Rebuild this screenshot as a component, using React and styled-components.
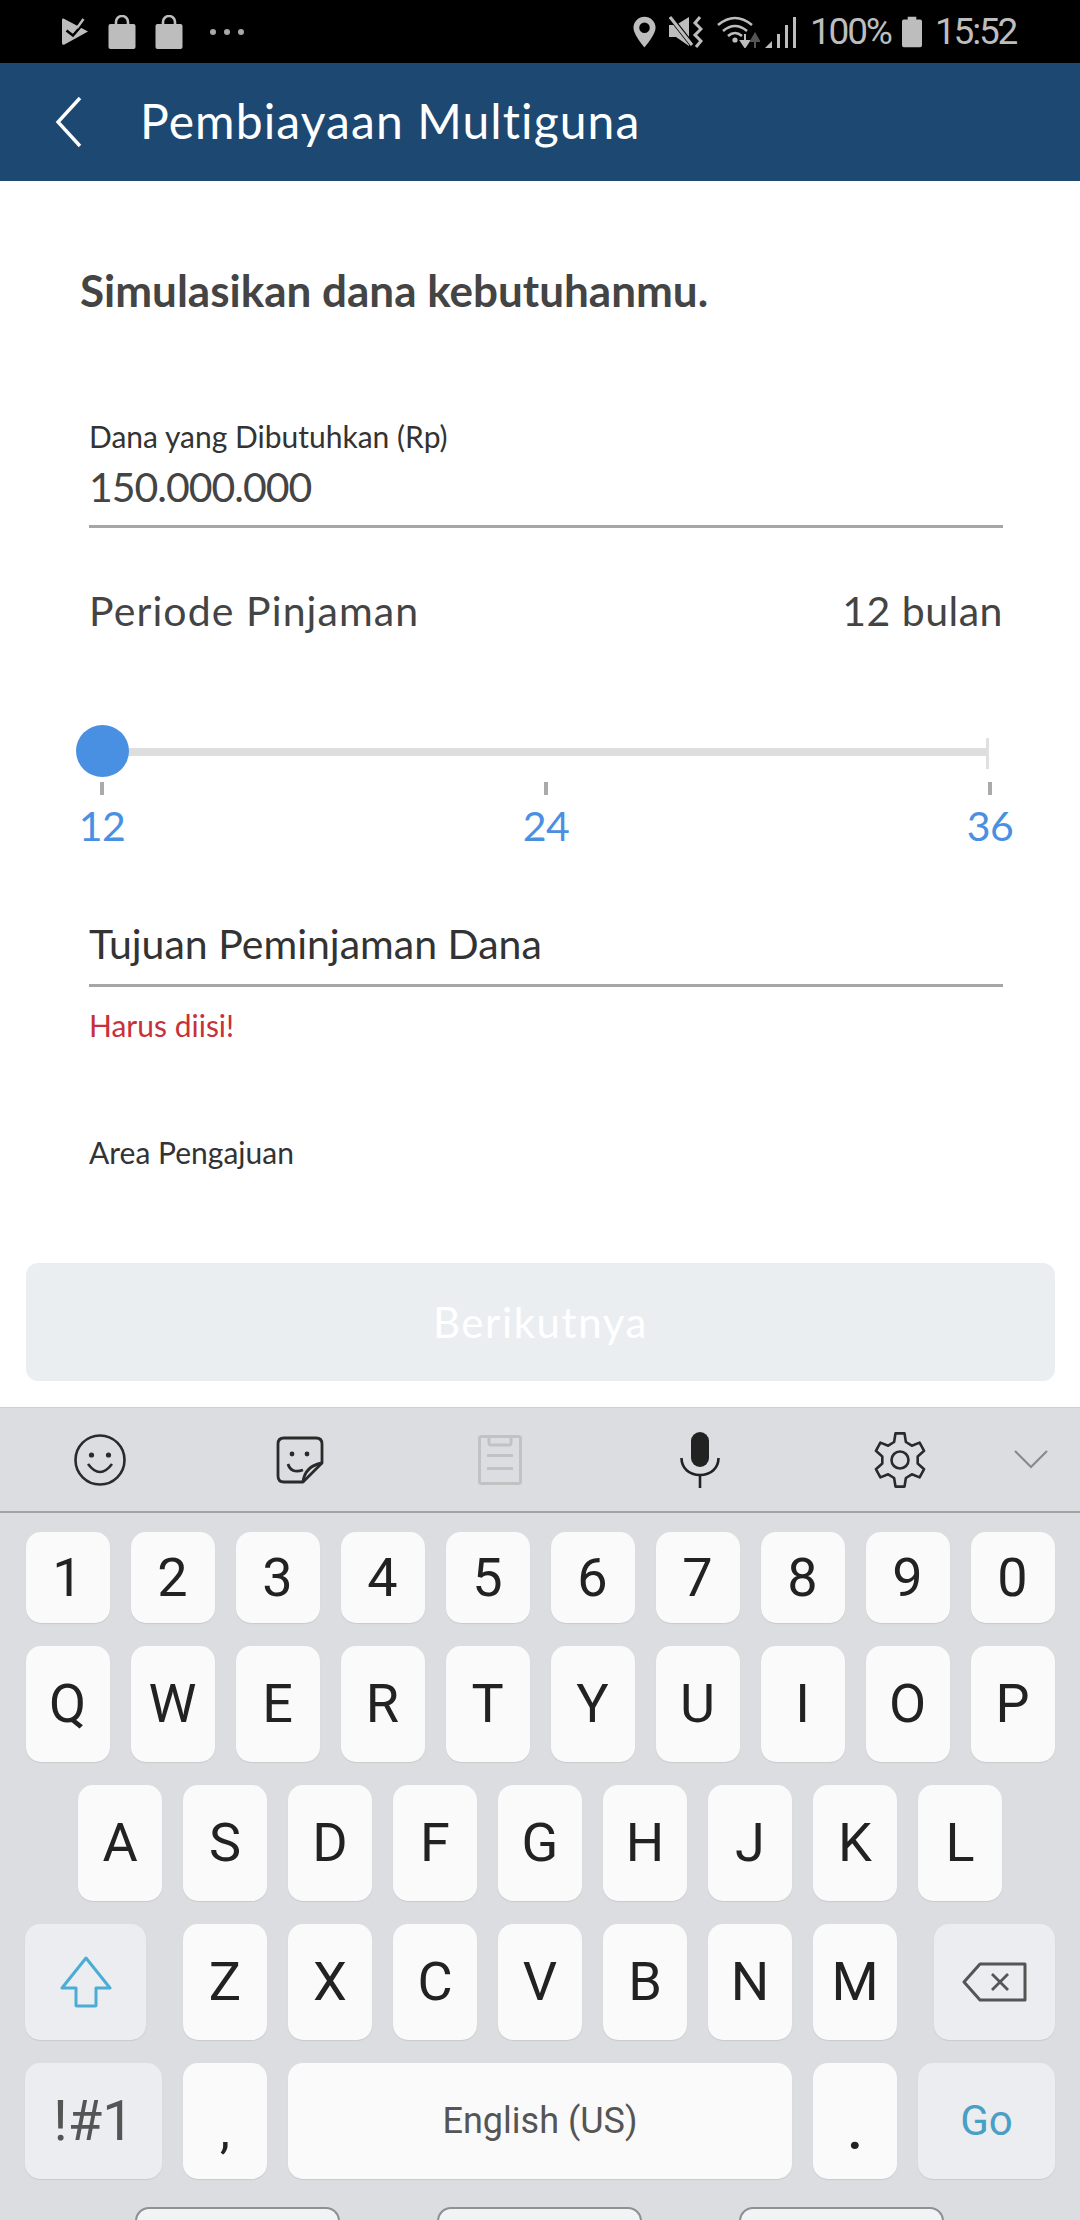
import React from 'react'
import styled, { createGlobalStyle } from 'styled-components'

const sans = '"Lato", "Noto Sans", sans-serif'
const keyFont = 'Roboto, "Liberation Sans", sans-serif'

const Global = createGlobalStyle`
  html, body { margin: 0; padding: 0; background: #fff; }
  * { box-sizing: border-box; }
`

const Screen = styled.div`
  width: 1080px;
  height: 2220px;
  overflow: hidden;
  display: flex;
  flex-direction: column;
  font-family: ${sans};
  background: #fff;
`

const StatusBar = styled.div`
  height: 63px;
  flex: none;
  background: #000;
  display: flex;
  align-items: center;
  justify-content: space-between;
  padding: 0 63px 0 62px;
  color: #bdbdbd;
`

const StatusGroup = styled.div`
  display: flex;
  align-items: center;
`

const StatusText = styled.span`
  width: ${p => p.$w}px;
  font-family: ${keyFont};
  font-size: 37px;
  line-height: 63px;
  letter-spacing: -2.2px;
  white-space: nowrap;
  margin-left: ${p => p.$left || 0}px;
`

const Header = styled.header`
  height: 118px;
  flex: none;
  background: #1c4871;
  display: flex;
  align-items: center;
  padding-left: 55px;
`

const HeaderTitle = styled.h1`
  margin: 0 0 2px 58px;
  font-size: 48px;
  font-weight: 400;
  letter-spacing: 1.1px;
  color: #fff;
  line-height: 60px;
`

const Page = styled.main`
  height: 1226px;
  flex: none;
  background: #fff;
`

const Fields = styled.div`
  padding: 0 77px 0 89px;
`

const Heading = styled.h2`
  margin: 84px 0 0 -9px;
  font-size: 44px;
  font-weight: 700;
  line-height: 50px;
  color: #444;
`

const SmallLabel = styled.div`
  margin-top: ${p => p.$top}px;
  font-size: 30px;
  line-height: 40px;
  color: ${p => p.$color || '#333'};
`

const InputLine = styled.div`
  margin-top: ${p => p.$top}px;
  padding-bottom: ${p => p.$pad}px;
  border-bottom: 3px solid #a6a6a6;
  font-size: 41px;
  line-height: 50px;
  letter-spacing: ${p => p.$spacing || 0}px;
  color: ${p => p.$color || '#444'};
`

const PeriodRow = styled.div`
  margin-top: 58px;
  display: flex;
  justify-content: space-between;
  font-size: 41px;
  line-height: 50px;
  color: #444;
`

const PeriodName = styled.span`
  letter-spacing: 1.1px;
`

const PeriodValue = styled.span`
  letter-spacing: 0.5px;
`

const Slider = styled.div`
  margin: 89px 0 0 13px;
  width: 887px;
  height: 52px;
  display: flex;
  align-items: center;
  position: relative;
`

const Track = styled.div`
  width: 100%;
  height: 8px;
  margin-top: 2px;
  background: #dedede;
`

const TrackEnd = styled.div`
  position: absolute;
  right: 0;
  top: 13px;
  width: 3px;
  height: 31px;
  background: #e0e0e0;
`

const Thumb = styled.div`
  position: absolute;
  left: -26px;
  top: 0;
  width: 53px;
  height: 52px;
  border-radius: 50%;
  background: #4a90e2;
`

const Stops = styled.div`
  margin: 5px 0 0 11px;
  width: 892px;
  display: flex;
  justify-content: space-between;
`

const Stop = styled.div`
  width: 4px;
  display: flex;
  flex-direction: column;
  align-items: center;
`

const Tick = styled.div`
  width: 4px;
  height: 13px;
  flex: none;
  background: #aaa;
`

const StopLabel = styled.div`
  margin-top: 6px;
  font-size: 41px;
  line-height: 50px;
  letter-spacing: -0.5px;
  color: #4a90e2;
`

const NextButton = styled.button`
  display: block;
  margin: 91px 25px 0 26px;
  width: 1029px;
  height: 118px;
  border: 0;
  border-radius: 12px;
  background: #ebeef1;
  color: #fff;
  font-family: ${sans};
  font-size: 42px;
  letter-spacing: 1.6px;
  padding: 0;
`

const Keyboard = styled.section`
  flex: 1;
  background: #dcdde1;
  border-top: 1px solid #cfcfcf;
  overflow: hidden;
`

const Toolbar = styled.div`
  height: 105px;
  border-bottom: 2px solid #a2a2a2;
  display: flex;
  align-items: center;
`

const ToolSlot = styled.div`
  width: 200px;
  display: flex;
  justify-content: center;
`

const KeyRows = styled.div`
  padding: 19px 25px 0 25px;
  display: flex;
  flex-direction: column;
`

const KeyRow = styled.div`
  display: flex;
  justify-content: ${p => p.$spread ? 'space-between' : 'center'};
  gap: 21px;
  margin-top: ${p => p.$top || 0}px;
`

const KeyGroup = styled.div`
  display: flex;
  gap: 21px;
`

const Key = styled.div`
  width: ${p => p.$w || 84}px;
  height: ${p => p.$h || 116}px;
  flex: none;
  display: flex;
  align-items: center;
  justify-content: center;
  padding-top: ${p => p.$drop || 0}px;
  border-radius: 15px;
  background: ${p => p.$fn ? '#ebedf0' : '#fafafa'};
  box-shadow: 0 1px 1px #c9cacd;
  font-family: ${keyFont};
  font-size: ${p => p.$size || 54}px;
  font-weight: ${p => p.$weight || 400};
  line-height: 1;
  color: ${p => p.$color || '#222'};
`

const TabRow = styled.div`
  margin-top: 28px;
  padding-left: 135px;
  display: flex;
  gap: 97px;
`

const TabKey = styled.div`
  width: 205px;
  height: 30px;
  flex: none;
  border: 2px solid #8f9094;
  border-radius: 14px;
  background: #f2f3f4;
`

const Icon = styled.svg`
  display: block;
  flex: none;
  margin-left: ${p => p.$left || 0}px;
`

// six teeth, one pointing straight up
const gearPath = (() => {
  const points = []
  for (let i = 0; i < 6; i++) {
    const a = -90 + i * 60
    const spots = [[-19, 19], [-10, 27], [10, 27], [19, 19]]
    spots.forEach(([off, r]) => {
      const rad = ((a + off) * Math.PI) / 180
      points.push(`${(26 + r * Math.cos(rad) * 0.95).toFixed(1)} ${(28 + r * Math.sin(rad)).toFixed(1)}`)
    })
  }
  return `M${points.join(' L')} Z`
})()

const PlayIcon = () => (
  <Icon width="26" height="27" viewBox="0 0 26 27">
    <path d="M1.5 0.5 L26 13.5 L2 26.8 Q0 27.2 0 25 V2 Q0 0 1.5 0.5 Z" fill="#bdbdbd" />
    <path d="M13 3 L24 0 V8 L20 10 Z" fill="#000" />
    <path d="M4.5 12.5 L11 17.5 L20 7" stroke="#000" strokeWidth="2.6" fill="none" />
    <path d="M15 10 L21.5 1" stroke="#bdbdbd" strokeWidth="2.4" fill="none" />
  </Icon>
)

const BagIcon = ({ left }) => (
  <Icon width="28" height="34" viewBox="0 0 28 34" $left={left}>
    <path d="M8 10 V7 a6 6 0 0 1 12 0 V10" stroke="#bdbdbd" strokeWidth="2.6" fill="none" />
    <rect x="0.5" y="9" width="27" height="25" rx="2" fill="#bdbdbd" />
  </Icon>
)

const Dots = () => (
  <Icon width="36" height="8" viewBox="0 0 36 8" $left={26}>
    <circle cx="4" cy="4" r="3" fill="#a8a8a8" />
    <circle cx="18" cy="4" r="3" fill="#a8a8a8" />
    <circle cx="32" cy="4" r="3" fill="#a8a8a8" />
  </Icon>
)

const PinIcon = () => (
  <Icon width="23" height="32" viewBox="0 0 24 32">
    <path fillRule="evenodd" d="M12 0 a11.5 11.5 0 0 1 11.5 11.5 C23.5 19 12 32 12 32 C12 32 .5 19 .5 11.5 A11.5 11.5 0 0 1 12 0 Z M12 6 a5.5 5.5 0 1 0 0 11 a5.5 5.5 0 0 0 0 -11 Z" fill="#bdbdbd" />
  </Icon>
)

const MuteIcon = () => (
  <Icon width="34" height="32" viewBox="0 0 34 32" $left={13}>
    <path d="M0 9 H7 L20 1 V30 L7 21 H0 Z" fill="#bdbdbd" />
    <path d="M2 2 L24 30" stroke="#000" strokeWidth="5" />
    <path d="M1 1 L23 29" stroke="#bdbdbd" strokeWidth="3" />
    <path d="M31 1 L26 7 L32 13 L26 19 L32 25 L27 31" stroke="#bdbdbd" strokeWidth="3" fill="none" />
  </Icon>
)

const WifiIcon = () => (
  <Icon width="43" height="32" viewBox="0 0 43 32" $left={14}>
    <path d="M1 9 Q18 -5 35 9 M6 15 Q18 5 30 15 M11 20 Q18 14 25 20" stroke="#bdbdbd" strokeWidth="2.6" fill="none" />
    <circle cx="18" cy="24" r="2.6" fill="#bdbdbd" />
    <path d="M28 18 V28 M24 25 L28 31 L32 25 Z" stroke="#bdbdbd" strokeWidth="2" fill="#bdbdbd" />
    <path d="M38 32 V22 M34 25 L38 18 L42 25 Z" stroke="#555" strokeWidth="2" fill="#555" />
  </Icon>
)

const SignalIcon = () => (
  <Icon width="31" height="32" viewBox="0 0 31 32" $left={5}>
    <path d="M0 32 L7 25 V32 Z" fill="#bdbdbd" />
    <rect x="12" y="18" width="3" height="14" fill="#bdbdbd" />
    <rect x="20" y="9" width="3" height="23" fill="#bdbdbd" />
    <rect x="28" y="1" width="3" height="31" fill="#bdbdbd" />
  </Icon>
)

const BatteryIcon = () => (
  <Icon width="20" height="32" viewBox="0 0 21 32" $left={14}>
    <path d="M6 0 H15 V3 H19 Q21 3 21 5 V30 Q21 32 19 32 H2 Q0 32 0 30 V5 Q0 3 2 3 H6 Z" fill="#bdbdbd" />
  </Icon>
)

const BackIcon = () => (
  <Icon width="27" height="52" viewBox="0 0 27 52">
    <path d="M25 2 L3 26 L25 50" stroke="#fff" strokeWidth="3.4" fill="none" />
  </Icon>
)

const SmileIcon = () => (
  <Icon width="52" height="52" viewBox="0 0 52 52">
    <circle cx="26" cy="26" r="24.5" stroke="#2a2a2a" strokeWidth="2.6" fill="none" />
    <circle cx="17.5" cy="21" r="2.6" fill="#2a2a2a" />
    <circle cx="34.5" cy="21" r="2.6" fill="#2a2a2a" />
    <path d="M14 30 Q26 46 38 30" stroke="#2a2a2a" strokeWidth="2.6" fill="none" />
  </Icon>
)

const StickerIcon = () => (
  <Icon width="48" height="48" viewBox="0 0 48 48">
    <path d="M27 46 H8 Q2 46 2 40 V8 Q2 2 8 2 H40 Q46 2 46 8 V27 L27 46 Z" stroke="#2a2a2a" strokeWidth="2.8" fill="none" strokeLinejoin="round" />
    <path d="M27 46 Q29 30 46 27" stroke="#2a2a2a" strokeWidth="2.8" fill="none" />
    <circle cx="16" cy="18" r="2.4" fill="#2a2a2a" />
    <circle cx="31" cy="18" r="2.4" fill="#2a2a2a" />
    <path d="M12 28 Q15 38 27 34" stroke="#2a2a2a" strokeWidth="2.8" fill="none" />
  </Icon>
)

const ClipIcon = () => (
  <Icon width="44" height="50" viewBox="0 0 44 50">
    <rect x="1.5" y="1.5" width="41" height="47" rx="2" stroke="#c2c2c2" strokeWidth="3" fill="none" />
    <path d="M11 2 V8 Q11 10 13 10 H31 Q33 10 33 8 V2" stroke="#c2c2c2" strokeWidth="3" fill="none" />
    <rect x="9" y="19" width="26" height="3" fill="#c2c2c2" />
    <rect x="9" y="32" width="26" height="3" fill="#c2c2c2" />
  </Icon>
)

const MicIcon = () => (
  <Icon width="40" height="56" viewBox="0 0 40 56">
    <rect x="11" y="0" width="18" height="35" rx="9" fill="#222" />
    <path d="M1.5 26 C1.5 36 9 43 20 43 C31 43 38.5 36 38.5 26" stroke="#222" strokeWidth="2.6" fill="none" />
    <path d="M20 43 V56" stroke="#222" strokeWidth="2.6" />
  </Icon>
)

const GearIcon = () => (
  <Icon width="52" height="56" viewBox="0 0 52 56">
    <path d={gearPath} stroke="#2a2a2a" strokeWidth="2.6" fill="none" strokeLinejoin="round" />
    <circle cx="26" cy="28" r="8.5" stroke="#2a2a2a" strokeWidth="2.6" fill="none" />
  </Icon>
)

const ChevronIcon = () => (
  <Icon width="34" height="19" viewBox="0 0 34 19" $left={14}>
    <path d="M1 1 L17 17 L33 1" stroke="#8a8a8a" strokeWidth="2.2" fill="none" />
  </Icon>
)

const ShiftIcon = () => (
  <svg width="52" height="52" viewBox="0 0 52 52">
    <path d="M26 2 L50 32 H36 V49 Q36 50 35 50 H17 Q16 50 16 49 V32 H2 Z" stroke="#4bacd6" strokeWidth="3" fill="none" strokeLinejoin="round" />
  </svg>
)

const DeleteIcon = () => (
  <svg width="66" height="40" viewBox="0 0 66 40">
    <path d="M18 2 H63 V38 H18 L2 20 Z" stroke="#555" strokeWidth="3" fill="none" strokeLinejoin="round" />
    <path d="M30 12 L46 28 M46 12 L30 28" stroke="#555" strokeWidth="2.8" />
  </svg>
)

const digits = ['1', '2', '3', '4', '5', '6', '7', '8', '9', '0']
const topRow = ['Q', 'W', 'E', 'R', 'T', 'Y', 'U', 'I', 'O', 'P']
const midRow = ['A', 'S', 'D', 'F', 'G', 'H', 'J', 'K', 'L']
const lowRow = ['Z', 'X', 'C', 'V', 'B', 'N', 'M']

function App() {
  return (
    <Screen>
      <Global />
      <StatusBar>
        <StatusGroup>
          <PlayIcon />
          <BagIcon left={20} />
          <BagIcon left={19} />
          <Dots />
        </StatusGroup>
        <StatusGroup>
          <PinIcon />
          <MuteIcon />
          <WifiIcon />
          <SignalIcon />
          <StatusText $left={14} $w={78}>100%</StatusText>
          <BatteryIcon />
          <StatusText $left={13} $w={82}>15:52</StatusText>
        </StatusGroup>
      </StatusBar>

      <Header>
        <BackIcon />
        <HeaderTitle>Pembiayaan Multiguna</HeaderTitle>
      </Header>

      <Page>
        <Fields>
          <Heading>Simulasikan dana kebutuhanmu.</Heading>
          <SmallLabel $top={101}>Dana yang Dibutuhkan (Rp)</SmallLabel>
          <InputLine $top={6} $pad={13} $spacing={-1}>150.000.000</InputLine>
          <PeriodRow>
            <PeriodName>Periode Pinjaman</PeriodName>
            <PeriodValue>12 bulan</PeriodValue>
          </PeriodRow>
          <Slider>
            <Track />
            <TrackEnd />
            <Thumb />
          </Slider>
          <Stops>
            {['12', '24', '36'].map(n => (
              <Stop key={n}>
                <Tick />
                <StopLabel>{n}</StopLabel>
              </Stop>
            ))}
          </Stops>
          <InputLine $top={68} $pad={15} $color="#333">Tujuan Peminjaman Dana</InputLine>
          <SmallLabel $top={18} $color="#c8303a">Harus diisi!</SmallLabel>
          <SmallLabel $top={87}>Area Pengajuan</SmallLabel>
        </Fields>
        <NextButton>Berikutnya</NextButton>
      </Page>

      <Keyboard>
        <Toolbar>
          <ToolSlot><SmileIcon /></ToolSlot>
          <ToolSlot><StickerIcon /></ToolSlot>
          <ToolSlot><ClipIcon /></ToolSlot>
          <ToolSlot><MicIcon /></ToolSlot>
          <ToolSlot><GearIcon /></ToolSlot>
          <ChevronIcon />
        </Toolbar>
        <KeyRows>
          <KeyRow>
            {digits.map(k => <Key key={k} $h={91}>{k}</Key>)}
          </KeyRow>
          <KeyRow $top={23}>
            {topRow.map(k => <Key key={k}>{k}</Key>)}
          </KeyRow>
          <KeyRow $top={23}>
            {midRow.map(k => <Key key={k}>{k}</Key>)}
          </KeyRow>
          <KeyRow $top={23} $spread>
            <Key $w={121} $fn><ShiftIcon /></Key>
            <KeyGroup>
              {lowRow.map(k => <Key key={k}>{k}</Key>)}
            </KeyGroup>
            <Key $w={121} $fn><DeleteIcon /></Key>
          </KeyRow>
          <KeyRow $top={23} $spread>
            <Key $w={137} $fn $size={56} $color="#555">!#1</Key>
            <Key $drop={18} $size={50}>,</Key>
            <Key $w={504} $size={36} $color="#555">English (US)</Key>
            <Key $drop={22} $size={50} $weight={700}>.</Key>
            <Key $w={137} $fn $size={42} $color="#4a9fc4">Go</Key>
          </KeyRow>
        </KeyRows>
        <TabRow>
          <TabKey />
          <TabKey />
          <TabKey />
        </TabRow>
      </Keyboard>
    </Screen>
  )
}

export default App
